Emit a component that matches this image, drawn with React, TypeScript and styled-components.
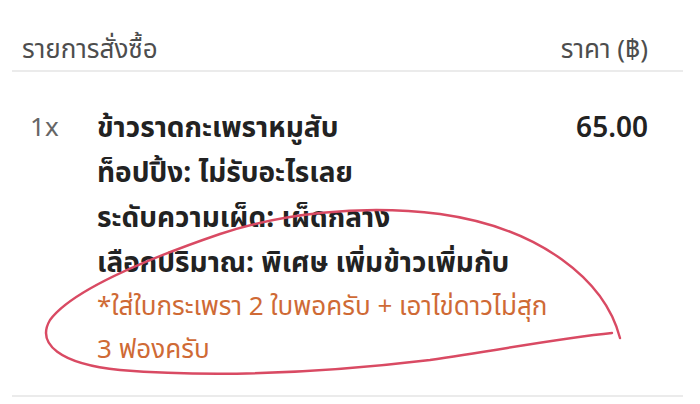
import styled, { createGlobalStyle } from 'styled-components';

const GlobalStyle = createGlobalStyle`
	body {
		margin: 0;
		background: #ffffff;
		font-family: "Noto Sans Thai", "Noto Sans", "DejaVu Sans", sans-serif;
	}
`;

const order = {
	qty: 1,
	name: 'ข้าวราดกะเพราหมูสับ',
	price: '65.00',
	options: ['ท็อปปิ้ง: ไม่รับอะไรเลย', 'ระดับความเผ็ด: เผ็ดกลาง', 'เลือกปริมาณ: พิเศษ เพิ่มข้าวเพิ่มกับ'],
	note: '*ใส่ใบกระเพรา 2 ใบพอครับ + เอาไข่ดาวไม่สุก 3 ฟองครับ',
};

export default function App() {
	return (
		<>
			<GlobalStyle />
			<Page>
				<Header>
					<HeaderLabel>รายการสั่งซื้อ</HeaderLabel>
					<HeaderLabel>ราคา (฿)</HeaderLabel>
				</Header>
				<ItemRow>
					<Qty>{order.qty}x</Qty>
					<Detail>
						<Line>{order.name}</Line>
						{order.options.map((o) => (
							<Line key={o}>{o}</Line>
						))}
						<Note>{order.note}</Note>
					</Detail>
					<Price>{order.price}</Price>
				</ItemRow>
				{/* hand-drawn circle over the note */}
				<Scribble viewBox="0 0 700 404" width="700" height="404">
					<path
						d="M 620 338 C 605 280, 540 228, 440 214 C 360 204, 280 214, 220 234 C 150 258, 72 290, 50 320 C 36 344, 60 364, 120 370 C 220 378, 330 372, 430 360 C 500 350, 560 338, 612 333"
						fill="none"
						stroke="#d94a63"
						strokeWidth="2.4"
						strokeLinecap="round"
					/>
				</Scribble>
			</Page>
		</>
	);
}

const Page = styled.div`
	position: relative;
	width: 700px;
	height: 404px;
	overflow: hidden;
`;

const Header = styled.div`
	box-sizing: border-box;
	height: 72px;
	margin: 0 17px 0 12px;
	padding: 30px 35px 0 10px;

	display: flex;
	justify-content: space-between;
	align-items: center;

	border-bottom: 2px solid #ebebeb;
`;

const HeaderLabel = styled.span`
	font-size: 26px;
	color: #4d4d4d;
`;

const ItemRow = styled.div`
	margin: 0 17px 0 12px;
	padding: 34px 35px 23px 18px;

	display: flex;
	align-items: flex-start;

	border-bottom: 2px solid #ebebeb;
`;

const Qty = styled.div`
	width: 67px;
	font-size: 26px;
	line-height: 45px;
	color: #666666;
`;

const Detail = styled.div`
	flex: 1;
`;

const Line = styled.div`
	font-size: 28px;
	font-weight: 700;
	line-height: 45px;
	color: #222222;
	white-space: nowrap;
`;

const Note = styled.div`
	width: 455px;
	font-size: 26px;
	line-height: 43px;
	color: #cf6a35;
`;

const Price = styled.div`
	font-size: 28px;
	font-weight: 600;
	line-height: 45px;
	color: #222222;
`;

const Scribble = styled.svg`
	position: absolute;
	top: 0;
	left: 0;
	pointer-events: none;
`;
